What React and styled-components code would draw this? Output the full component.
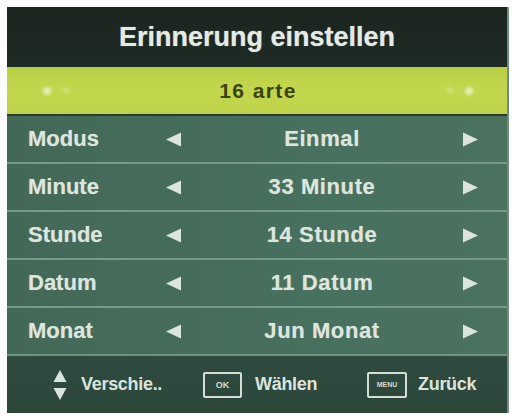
import React from "react";
import styled, { createGlobalStyle } from "styled-components";

const Global = createGlobalStyle`
  html, body { margin: 0; padding: 0; background: #fbfcfb; }
  body { font-family: "Liberation Sans", Arial, sans-serif; }
`;

const Panel = styled.div`
  margin: 7px 0 0 7px;
  width: 500px;
  height: 406px;
  display: flex;
  flex-direction: column;
  background: #456b5a;
  box-shadow: 2px 0 0 #6f8a7e;
  overflow: hidden;
`;

const TitleBar = styled.div`
  height: 60px;
  flex: none;
  display: flex;
  align-items: center;
  justify-content: center;
  background: linear-gradient(180deg, #1b2520 0%, #1f2b25 100%);
  color: #e4eae4;
  font-weight: bold;
  font-size: 27px;
  text-shadow: 0 0 1px rgba(230, 236, 230, 0.6);
`;

const ChannelBar = styled.div`
  height: 47px;
  flex: none;
  display: flex;
  align-items: center;
  justify-content: space-between;
  padding: 0 34px 0 36px;
  background: linear-gradient(180deg, #b9cf44 0%, #c3d74e 50%, #bdd24a 100%);
  color: #3a4512;
  font-weight: bold;
  font-size: 21px;
  letter-spacing: 1.4px;
`;

const FaintPair = styled.div`
  display: flex;
  gap: 12px;
  width: 36px;
  justify-content: ${(p) => (p.$right ? "flex-end" : "flex-start")};
`;

const FaintDot = styled.span`
  width: ${(p) => p.$size}px;
  height: ${(p) => p.$size}px;
  border-radius: 50%;
  background: rgba(240, 245, 220, ${(p) => p.$alpha});
  filter: blur(1.5px);
`;

const Row = styled.div`
  height: 46px;
  flex: none;
  display: grid;
  grid-template-columns: 137px 17px 1fr 17px;
  align-items: center;
  padding: 0 28px 0 21px;
  border-top: 2px solid ${(p) => (p.$first ? "#2a3b31" : "#76998a")};
  background: linear-gradient(90deg, #436857 0%, #48705e 60%, #4a725f 100%);
  color: #dde6de;
  font-weight: bold;
  font-size: 22px;
  text-shadow: 0 0 1px rgba(220, 230, 222, 0.5);
`;

const Label = styled.span``;

const Value = styled.span`
  text-align: center;
  letter-spacing: 0.6px;
`;

const Arrow = styled.svg`
  width: 17px;
  height: 15px;
  display: block;
`;

const Footer = styled.div`
  flex: 1;
  display: grid;
  grid-template-columns: 150px 164px 1fr;
  align-items: center;
  padding-left: 46px;
  border-top: 2px solid #6f9383;
  background: linear-gradient(180deg, #2f4b3f 0%, #2c463a 100%);
  color: #dbe4dc;
  font-weight: bold;
  font-size: 18px;
  letter-spacing: -0.3px;
`;

const Hint = styled.div`
  display: flex;
  align-items: center;
  gap: ${(p) => p.$gap}px;
`;

const KeyBox = styled.span`
  box-sizing: border-box;
  width: ${(p) => p.$w}px;
  height: 26px;
  border: 2px solid #d5ded6;
  border-radius: 2px;
  display: flex;
  align-items: center;
  justify-content: center;
  font-size: ${(p) => p.$fs}px;
  letter-spacing: 0;
  color: #d5ded6;
`;

const LeftArrow = () => (
  <Arrow viewBox="0 0 17 15">
    <polygon points="1,7.5 16,0.5 16,14.5" fill="#dce5dd" />
  </Arrow>
);

const RightArrow = () => (
  <Arrow viewBox="0 0 17 15">
    <polygon points="16,7.5 1,0.5 1,14.5" fill="#dce5dd" />
  </Arrow>
);

const UpDown = () => (
  <svg width="14" height="30" viewBox="0 0 14 30">
    <polygon points="7,0 13.5,12 0.5,12" fill="#dbe4dc" />
    <polygon points="0.5,18 13.5,18 7,30" fill="#dbe4dc" />
  </svg>
);

const rows = [
  ["Modus", "Einmal"],
  ["Minute", "33 Minute"],
  ["Stunde", "14 Stunde"],
  ["Datum", "11 Datum"],
  ["Monat", "Jun Monat"],
];

export default function App() {
  return (
    <>
      <Global />
      <Panel>
        <TitleBar>Erinnerung einstellen</TitleBar>
        <ChannelBar>
          <FaintPair>
            <FaintDot $size={8} $alpha={0.75} />
            <FaintDot $size={6} $alpha={0.3} />
          </FaintPair>
          <span>16 arte</span>
          <FaintPair $right>
            <FaintDot $size={6} $alpha={0.3} />
            <FaintDot $size={8} $alpha={0.75} />
          </FaintPair>
        </ChannelBar>
        {rows.map(([label, value], i) => (
          <Row key={label} $first={i === 0}>
            <Label>{label}</Label>
            <LeftArrow />
            <Value>{value}</Value>
            <RightArrow />
          </Row>
        ))}
        <Footer>
          <Hint $gap={14}>
            <UpDown />
            <span>Verschie..</span>
          </Hint>
          <Hint $gap={13}>
            <KeyBox $w={39} $fs={9}>OK</KeyBox>
            <span>Wählen</span>
          </Hint>
          <Hint $gap={11}>
            <KeyBox $w={40} $fs={7}>MENU</KeyBox>
            <span>Zurück</span>
          </Hint>
        </Footer>
      </Panel>
    </>
  );
}
